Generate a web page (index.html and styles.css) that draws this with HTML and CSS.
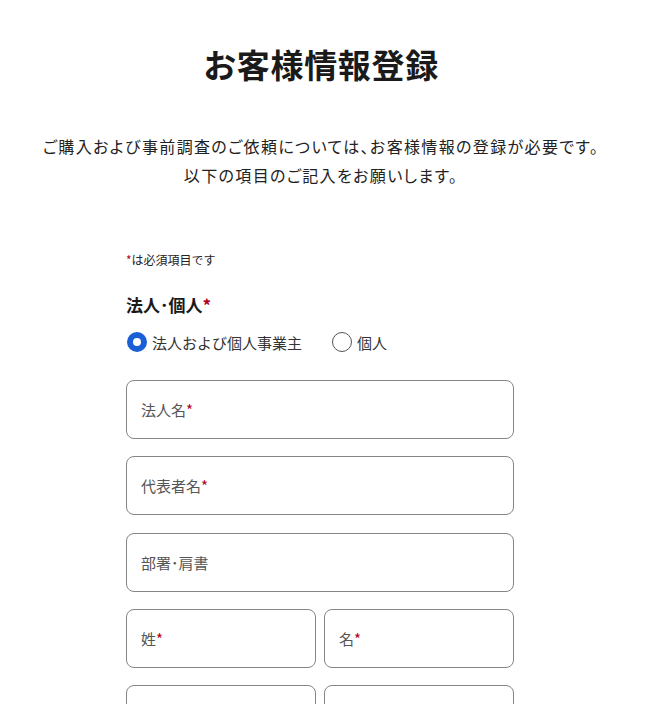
FILE: index.html
```html
<!DOCTYPE html>
<html lang="ja">
<head>
<meta charset="utf-8">
<title>お客様情報登録</title>
<link rel="stylesheet" href="styles.css">
</head>
<body>
<main class="page">
  <h1 class="title">お客様情報登録</h1>
  <p class="intro">ご購入および事前調査のご依頼については、お客様情報の登録が必要です。<br>以下の項目のご記入をお願いします。</p>
  <form class="form">
    <p class="note"><span class="req">*</span>は必須項目です</p>
    <div class="group-label">法人･個人<span class="req">*</span></div>
    <div class="radios">
      <label class="radio"><span class="dot checked"></span>法人および個人事業主</label>
      <label class="radio"><span class="dot"></span>個人</label>
    </div>
    <div class="fields">
      <div class="field">法人名<span class="req">*</span></div>
      <div class="field">代表者名<span class="req">*</span></div>
      <div class="field">部署･肩書</div>
      <div class="row">
        <div class="field">姓<span class="req">*</span></div>
        <div class="field">名<span class="req">*</span></div>
      </div>
      <div class="row">
        <div class="field"></div>
        <div class="field"></div>
      </div>
    </div>
  </form>
</main>
</body>
</html>
```
FILE: styles.css
```css
html, body {
  margin: 0;
  padding: 0;
  background: #fff;
}
body {
  font-family: "Noto Sans CJK JP", "Noto Sans", sans-serif;
  color: #1a1a1a;
  overflow: hidden;
}
.page {
  width: 642px;
  padding-top: 40px;
}
.title {
  margin: 0;
  text-align: center;
  font-size: 33px;
  line-height: 48px;
  font-weight: 700;
  letter-spacing: 0.02em;
}
.intro {
  margin: 44px 0 0;
  text-align: center;
  font-size: 16px;
  line-height: 29px;
  color: #222;
  font-feature-settings: "palt";
  letter-spacing: 0.085em;
}
.form {
  width: 388px;
  margin: 61px 0 0 126px;
}
.note {
  margin: 0;
  font-size: 12px;
  line-height: 18px;
  color: #222;
}
.req {
  color: #b3001b;
}
.group-label {
  margin-top: 24px;
  font-size: 17px;
  line-height: 24px;
  font-weight: 700;
}
.radios {
  margin-top: 13px;
  display: flex;
  gap: 29px;
  height: 24px;
  align-items: center;
}
.radio {
  display: flex;
  align-items: center;
  gap: 5px;
  font-size: 15px;
  color: #333;
}
.dot {
  box-sizing: border-box;
  width: 20px;
  height: 20px;
  border-radius: 50%;
  border: 1.5px solid #555;
  margin-left: 1px;
}
.dot.checked {
  border: 6px solid #1a5fd6;
  background: #fff;
}
.fields {
  margin-top: 26px;
  display: flex;
  flex-direction: column;
  gap: 17.25px;
}
.row {
  display: grid;
  grid-template-columns: 1fr 1fr;
  gap: 8px;
}
.field {
  box-sizing: border-box;
  height: 59px;
  border: 1px solid #858585;
  border-radius: 8px;
  padding-left: 14px;
  display: flex;
  align-items: center;
  font-size: 15px;
  color: #555;
}
```
